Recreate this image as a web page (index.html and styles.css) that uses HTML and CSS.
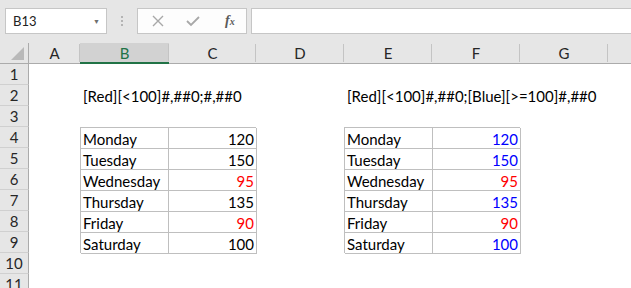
FILE: index.html
```html
<!DOCTYPE html>
<html lang="en">
<head>
  <meta charset="UTF-8">
  <title>Custom number format</title>
  <link rel="stylesheet" href="styles.css">
</head>
<body>
  <div class="formula-bar">
    <div class="name-box">
      <span>B13</span>
      <span class="drop">&#9660;</span>
    </div>
    <div class="grip"><i></i><i></i><i></i></div>
    <div class="fx-box">
      <svg class="icon" width="12" height="12" viewBox="0 0 12 12"><path d="M1 1 L11 11 M11 1 L1 11" stroke="#a8a8a8" stroke-width="1.4" fill="none"/></svg>
      <svg class="icon" width="14" height="12" viewBox="0 0 14 12"><path d="M1 6 L5 10 L13 2" stroke="#a8a8a8" stroke-width="1.8" fill="none"/></svg>
      <span class="fx">f<sub>x</sub></span>
    </div>
    <div class="formula-input"></div>
  </div>

  <div class="sheet">
    <!-- column headers -->
    <div class="corner"><span></span></div>
    <div class="col-head">A</div>
    <div class="col-head selected">B</div>
    <div class="col-head">C</div>
    <div class="col-head">D</div>
    <div class="col-head">E</div>
    <div class="col-head">F</div>
    <div class="col-head">G</div>
    <div class="col-head last"></div>

    <!-- row headers -->
    <div class="row-head r1">1</div>
    <div class="row-head r2">2</div>
    <div class="row-head r3">3</div>
    <div class="row-head r4">4</div>
    <div class="row-head r5">5</div>
    <div class="row-head r6">6</div>
    <div class="row-head r7">7</div>
    <div class="row-head r8">8</div>
    <div class="row-head r9">9</div>
    <div class="row-head r10">10</div>
    <div class="row-head r11">11</div>

    <div class="note note-left">[Red][&lt;100]#,##0;#,##0</div>
    <div class="note note-right">[Red][&lt;100]#,##0;[Blue][&gt;=100]#,##0</div>

    <div class="days days-left">
      <div class="cell">Monday</div><div class="cell num">120</div>
      <div class="cell">Tuesday</div><div class="cell num">150</div>
      <div class="cell">Wednesday</div><div class="cell num red">95</div>
      <div class="cell">Thursday</div><div class="cell num">135</div>
      <div class="cell">Friday</div><div class="cell num red">90</div>
      <div class="cell">Saturday</div><div class="cell num">100</div>
    </div>

    <div class="days days-right">
      <div class="cell">Monday</div><div class="cell num blue">120</div>
      <div class="cell">Tuesday</div><div class="cell num blue">150</div>
      <div class="cell">Wednesday</div><div class="cell num red">95</div>
      <div class="cell">Thursday</div><div class="cell num blue">135</div>
      <div class="cell">Friday</div><div class="cell num red">90</div>
      <div class="cell">Saturday</div><div class="cell num blue">100</div>
    </div>
  </div>
</body>
</html>
```

FILE: styles.css
```css
body {
  margin: 0;
  padding: 0;
  background-color: white;
  font-family: Lato, "Open Sans", sans-serif;
  overflow: hidden;
}

/* Top bar with name box and formula input */
.formula-bar {
  height: 43px;
  background-color: #e6e6e6;
  display: flex;
  align-items: flex-start;
  padding-top: 8px;
  padding-left: 5px;
  box-sizing: border-box;
}
.name-box {
  width: 102px;
  height: 26px;
  box-sizing: border-box;
  background-color: white;
  border: 1px solid #c6c6c6;
  display: flex;
  align-items: center;
  justify-content: space-between;
  padding: 0 6px 0 7px;
  font-size: 13px;
  color: #222;
}
.name-box .drop {
  font-size: 7px;
  color: #6f6f6f;
}
.grip {
  width: 30px;
  height: 26px;
  display: flex;
  flex-direction: column;
  align-items: center;
  justify-content: center;
  gap: 2px;
}
.grip i {
  width: 2px;
  height: 2px;
  background-color: #b4b4b4;
}
.fx-box {
  width: 110px;
  height: 26px;
  box-sizing: border-box;
  background-color: #fdfdfd;
  border: 1px solid #c6c6c6;
  display: flex;
  align-items: center;
  padding-left: 14px;
  gap: 22px;
}
.fx {
  font-family: "Liberation Serif", serif;
  font-style: italic;
  font-weight: bold;
  font-size: 14px;
  color: #5a5a5a;
  margin-left: 3px;
}
.fx sub {
  font-size: 10px;
  vertical-align: 0;
}
.formula-input {
  flex: 1;
  height: 26px;
  box-sizing: border-box;
  margin-left: 4px;
  background-color: white;
  border: 1px solid #c6c6c6;
  border-right: none;
}

/* Sheet grid */
.sheet {
  display: grid;
  grid-template-columns: 29px 51px 89px 87px 88px 88px 88px 88px 1fr;
  grid-template-rows: 21px repeat(11, 21px);
  background-color: white;
}
.corner {
  background-color: #e6e6e6;
  border-right: 1px solid #ababab;
  border-bottom: 1px solid #ababab;
  position: relative;
}
.corner span {
  position: absolute;
  right: 4px;
  bottom: 3px;
  width: 0;
  height: 0;
  border-left: 13px solid transparent;
  border-bottom: 13px solid #b9b9b9;
}
.col-head {
  background-color: #e6e6e6;
  border-bottom: 1px solid #ababab;
  font-size: 15px;
  color: #262626;
  display: flex;
  align-items: center;
  justify-content: center;
  position: relative;
}
.col-head::after {
  content: "";
  position: absolute;
  right: 0;
  top: 1px;
  bottom: 1px;
  width: 1px;
  background-color: #c4c4c4;
}
.col-head.last::after {
  display: none;
}
.col-head.selected {
  background-color: #d2d2d2;
  color: #217346;
  border-bottom: 2px solid #217346;
}

.row-head {
  grid-column: 1;
  background-color: #e6e6e6;
  border-right: 1px solid #ababab;
  border-bottom: 1px solid #d0d0d0;
  font-size: 15px;
  color: #262626;
  display: flex;
  align-items: center;
  justify-content: center;
}
.r1 { grid-row: 2; }
.r2 { grid-row: 3; }
.r3 { grid-row: 4; }
.r4 { grid-row: 5; }
.r5 { grid-row: 6; }
.r6 { grid-row: 7; }
.r7 { grid-row: 8; }
.r8 { grid-row: 9; }
.r9 { grid-row: 10; }
.r10 { grid-row: 11; }
.r11 { grid-row: 12; }

.note {
  grid-row: 3;
  font-size: 15px;
  color: black;
  display: flex;
  align-items: center;
  padding-left: 3px;
  white-space: nowrap;
}
.note-left { grid-column: 3 / 6; }
.note-right { grid-column: 6 / 10; }

/* Bordered day tables */
.days {
  grid-row: 5 / 11;
  display: grid;
  grid-template-columns: 88px 88px;
  grid-auto-rows: 21px;
  border-top: 1px solid #bfbfbf;
  border-left: 1px solid #bfbfbf;
}
.days-left { grid-column: 3 / 5; }
.days-right { grid-column: 6 / 8; }
.cell {
  border-right: 1px solid #bfbfbf;
  border-bottom: 1px solid #bfbfbf;
  font-size: 15px;
  color: black;
  display: flex;
  align-items: center;
  padding: 1px 2px 0 2px;
}
.num {
  justify-content: flex-end;
}
.red {
  color: #ff0000;
}
.blue {
  color: #0000ff;
}
```
